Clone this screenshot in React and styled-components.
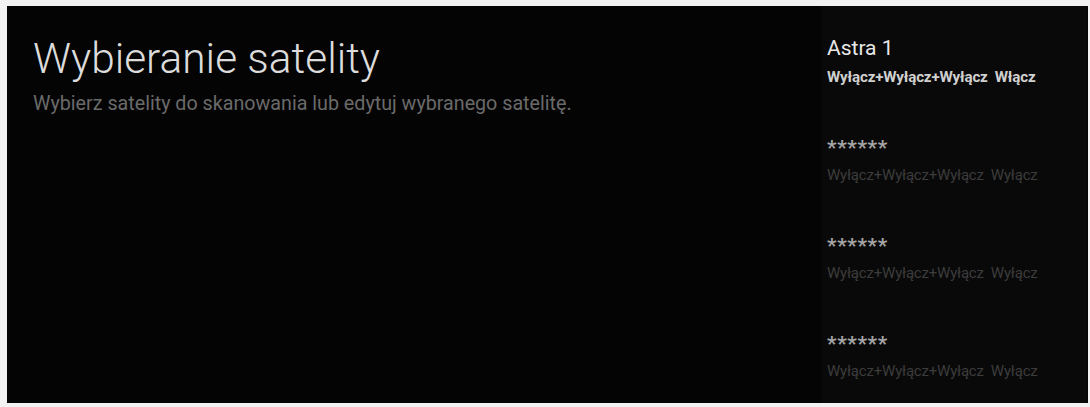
import React from "react";
import styled, { createGlobalStyle } from "styled-components";

const Global = createGlobalStyle`
  html, body { margin: 0; padding: 0; background: #f2f2f2; }
  body { font-family: Roboto, "Noto Sans", sans-serif; }
`;

const Frame = styled.div`
  width: 1090px;
  height: 407px;
  box-sizing: border-box;
  padding: 6px 2px 4px 7px;
  display: flex;
`;

const Screen = styled.div`
  flex: 1;
  background: #040404;
  display: flex;
  overflow: hidden;
`;

const Main = styled.div`
  flex: 1;
  padding: 27.5px 0 0 26px;
  display: flex;
  flex-direction: column;
`;

const Title = styled.h1`
  margin: 0;
  font-family: Roboto, sans-serif;
  font-weight: 300;
  font-size: 42.4px;
  line-height: 50px;
  color: #dcdcdc;
`;

const Subtitle = styled.p`
  margin: 9.5px 0 0 0;
  font-family: Roboto, sans-serif;
  font-size: 19.7px;
  line-height: 22px;
  color: #6a6a6a;
`;

const Side = styled.div`
  width: 260px;
  flex-shrink: 0;
  margin: 0 1px 0 0;
  background: #090909;
  padding: 29px 0 0 6px;
  display: flex;
  flex-direction: column;
  overflow: hidden;
`;

const Item = styled.div`
  display: flex;
  flex-direction: column;
  flex-shrink: 0;
  height: ${(p) => (p.$first ? "99px" : "98px")};
`;

const ItemName = styled.div`
  font-family: Roboto, sans-serif;
  font-size: ${(p) => (p.$active ? "21px" : "21px")};
  line-height: ${(p) => (p.$active ? "26px" : "28px")};
  font-weight: ${(p) => (p.$active ? 400 : 700)};
  color: ${(p) => (p.$active ? "#e8e8e8" : "#a4a4a4")};
  letter-spacing: ${(p) => (p.$active ? "0" : "0.6px")};
`;

const ItemSub = styled.div`
  margin-top: ${(p) => (p.$active ? "7px" : "4px")};
  font-family: Roboto, sans-serif;
  font-size: ${(p) => (p.$active ? "15.2px" : "15px")};
  line-height: 18px;
  font-weight: ${(p) => (p.$active ? 700 : 400)};
  color: ${(p) => (p.$active ? "#d0d0d0" : "#3c3c3c")};
  letter-spacing: -0.2px;
  white-space: pre;
`;

const items = [
  { name: "Astra 1", sub: "Wyłącz+Wyłącz+Wyłącz  Włącz", active: true },
  { name: "******", sub: "Wyłącz+Wyłącz+Wyłącz  Wyłącz" },
  { name: "******", sub: "Wyłącz+Wyłącz+Wyłącz  Wyłącz" },
  { name: "******", sub: "Wyłącz+Wyłącz+Wyłącz  Wyłącz" },
];

export default function App() {
  return (
    <>
      <Global />
      <Frame>
        <Screen>
          <Main>
            <Title>Wybieranie satelity</Title>
            <Subtitle>Wybierz satelity do skanowania lub edytuj wybranego satelitę.</Subtitle>
          </Main>
          <Side>
            {items.map((it, i) => (
              <Item key={i} $first={i === 0}>
                <ItemName $active={it.active}>{it.name}</ItemName>
                <ItemSub $active={it.active}>{it.sub}</ItemSub>
              </Item>
            ))}
          </Side>
        </Screen>
      </Frame>
    </>
  );
}
